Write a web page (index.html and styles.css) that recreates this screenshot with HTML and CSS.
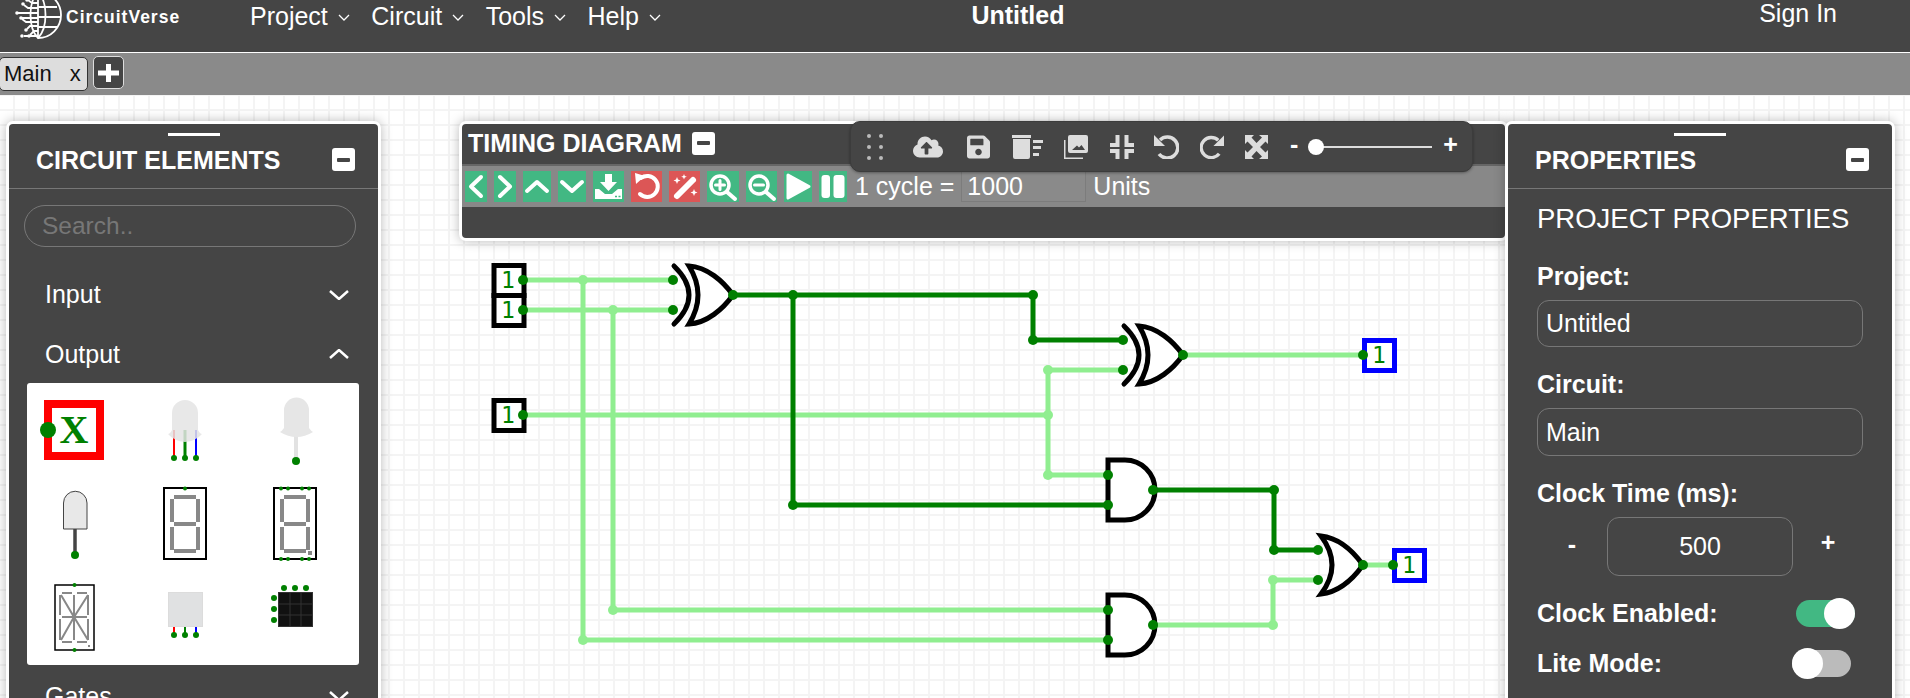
FILE: index.html
```html
<!DOCTYPE html>
<html lang="en">
<head>
<meta charset="utf-8">
<title>CircuitVerse Simulator</title>
<link rel="stylesheet" href="styles.css">
</head>
<body>
<header class="nav">
  <a class="logo">
    <svg class="logo-mark" viewBox="0 0 48 40" width="48" height="40">
      <g fill="none" stroke="#fff" stroke-width="1.8">
        <path d="M24 -8 A23 23 0 0 1 24 38"/>
        <path d="M24 -8 C14 2 14 28 24 38 C34 28 34 2 24 -8"/>
        <path d="M24 -8 V38"/>
        <path d="M24 7 H43 M24 17 H47 M24 27 H43"/>
        <path d="M24 3 H18 L14 0 M24 8 H14 L10 5 M24 13 H4 M24 18 H8 M24 22 H12 L8 19 M24 26 H16 L13 29 M24 31 H20 L16 35 M24 36 H10"/>
      </g>
      <g fill="#fff">
        <circle cx="13" cy="0" r="1.800"/><circle cx="9" cy="4" r="1.800"/><circle cx="3" cy="13" r="1.800"/><circle cx="7" cy="18" r="1.800"/><circle cx="12" cy="30" r="1.800"/><circle cx="15" cy="36" r="1.800"/><circle cx="8" cy="36" r="1.800"/>
      </g>
    </svg>
    <span class="logo-text">CircuitVerse</span>
  </a>
  <nav class="menu">
    <span class="menu-item">Project<svg class="caret" viewBox="0 0 12 7" width="12" height="7"><path d="M1 1L6 6L11 1"/></svg></span>
    <span class="menu-item">Circuit<svg class="caret" viewBox="0 0 12 7" width="12" height="7"><path d="M1 1L6 6L11 1"/></svg></span>
    <span class="menu-item">Tools<svg class="caret" viewBox="0 0 12 7" width="12" height="7"><path d="M1 1L6 6L11 1"/></svg></span>
    <span class="menu-item">Help<svg class="caret" viewBox="0 0 12 7" width="12" height="7"><path d="M1 1L6 6L11 1"/></svg></span>
  </nav>
  <div class="doc-title">Untitled</div>
  <div class="sign-in">Sign In</div>
</header>

<div class="tabs">
  <div class="tab"><span>Main</span><span class="tab-x">x</span></div>
  <button class="tab-add"><svg viewBox="0 0 21 20" width="21" height="20"><path d="M10.500 1V19M0 10H21" stroke="#fff" stroke-width="5"/></svg></button>
</div>

<main class="canvas">
  <svg class="circuit" viewBox="0 95 1910 603" width="1910" height="603">
    <g class="wire-on">
      <path d="M523 280H673M523 310H673M583 280V640H1108M613 310V610H1108M523 415H1048M1048 370V475M1048 370H1123M1048 475H1108M1183 355H1363M1153 625H1273V580H1318M1363 565H1393"/>
    </g>
    <g class="wire-hi">
      <path d="M733 295H1033V340H1123M793 295V505H1108M1153 490H1274V550H1318"/>
    </g>
    <g class="in-box">
      <rect x="494" y="265.500" width="30" height="30"/>
      <rect x="494" y="295.500" width="30" height="30"/>
      <rect x="494" y="400.500" width="30" height="30"/>
    </g>
    <g class="out-box">
      <rect x="1364.500" y="340.500" width="30" height="30"/>
      <rect x="1394.500" y="550.500" width="30" height="30"/>
    </g>
    <g class="bit">
      <text x="508" y="288">1</text>
      <text x="508" y="318">1</text>
      <text x="508" y="423">1</text>
      <text x="1379" y="363">1</text>
      <text x="1409" y="573">1</text>
    </g>
    <g class="gate">
      <g>
        <path d="M674 266Q704 295 674 324"/>
        <path d="M689 266C707 267 723 281 733 295C723 309 707 323 689 324Q707 295 689 266Z"/>
      </g>
      <g transform="translate(450 60)">
        <path d="M674 266Q704 295 674 324"/>
        <path d="M689 266C707 267 723 281 733 295C723 309 707 323 689 324Q707 295 689 266Z"/>
      </g>
      <path d="M1108 460H1125A30 30 0 0 1 1125 520H1108Z"/>
      <path d="M1108 595H1125A30 30 0 0 1 1125 655H1108Z"/>
      <path d="M1321 536C1339 538 1353 551 1363 565C1353 579 1339 592 1321 594Q1343 565 1321 536Z"/>
    </g>
    <g class="node-on">
      <circle cx="583" cy="280" r="5"/><circle cx="613" cy="310" r="5"/><circle cx="1048" cy="370" r="5"/><circle cx="1048" cy="415" r="5"/><circle cx="1048" cy="475" r="5"/><circle cx="1273" cy="580" r="5"/><circle cx="1273" cy="625" r="5"/><circle cx="583" cy="640" r="5"/><circle cx="613" cy="610" r="5"/>
    </g>
    <g class="node">
      <circle cx="523" cy="280" r="5"/><circle cx="523" cy="310" r="5"/><circle cx="523" cy="415" r="5"/><circle cx="673" cy="280" r="5"/><circle cx="673" cy="310" r="5"/><circle cx="733" cy="295" r="5"/><circle cx="793" cy="295" r="5"/><circle cx="793" cy="505" r="5"/><circle cx="1033" cy="295" r="5"/><circle cx="1033" cy="340" r="5"/><circle cx="1123" cy="340" r="5"/><circle cx="1123" cy="370" r="5"/><circle cx="1183" cy="355" r="5"/><circle cx="1363" cy="355" r="5"/><circle cx="1108" cy="475" r="5"/><circle cx="1108" cy="505" r="5"/><circle cx="1153" cy="490" r="5"/><circle cx="1274" cy="490" r="5"/><circle cx="1274" cy="550" r="5"/><circle cx="1318" cy="550" r="5"/><circle cx="1318" cy="580" r="5"/><circle cx="1363" cy="565" r="5"/><circle cx="1393" cy="565" r="5"/><circle cx="1108" cy="610" r="5"/><circle cx="1108" cy="640" r="5"/><circle cx="1153" cy="625" r="5"/>
    </g>
  </svg>

  <section class="panel timing">
    <div class="timing-head">
      <h2 class="panel-title">TIMING DIAGRAM</h2>
      <span class="minus"></span>
    </div>
    <div class="timing-bar">
      <span class="tbtn w22"><svg viewBox="0 0 22 31"><path class="ic" d="M16 6L6 15.500L16 25"/></svg></span>
      <span class="tbtn w22"><svg viewBox="0 0 22 31"><path class="ic" d="M6 6L16 15.500L6 25"/></svg></span>
      <span class="tbtn w28"><svg viewBox="0 0 28 31"><path class="ic" d="M4 20L14 11L24 20"/></svg></span>
      <span class="tbtn w28"><svg viewBox="0 0 28 31"><path class="ic" d="M4 11L14 20L24 11"/></svg></span>
      <span class="tbtn w31"><svg viewBox="0 0 31 31"><path class="solid" d="M12 3H19V11H24L15.500 20L7 11H12ZM2 18H6L12 23H19L25 18H29V28H2Z"/><path d="M22 25.500h2M25.500 25.500h2" stroke="#42b883" stroke-width="1.500"/></svg></span>
      <span class="tbtn red w31"><svg viewBox="0 0 31 31"><path class="ic" d="M10 7A10.500 10.500 0 1 1 9 23"/><path class="solid" d="M4 2L5 13L14 5Z"/></svg></span>
      <span class="tbtn red w31"><svg viewBox="0 0 31 31"><path class="ic wide" d="M8 25L24 9"/><path class="solid" d="M8 6l1 2.500 2.500 1-2.500 1-1 2.500-1-2.500-2.500-1 2.500-1zM15 3l.8 2 2 .8-2 .8-.8 2-.8-2-2-.8 2-.8zM25 18l1 2.500 2.500 1-2.500 1-1 2.500-1-2.500-2.500-1 2.500-1z"/></svg></span>
      <span class="tbtn w32"><svg viewBox="0 0 32 31"><circle class="ring" cx="13" cy="14" r="9"/><path class="ic" d="M20 21L28 28"/><path class="thin" d="M13 9.500V18.500M8.500 14H17.500"/></svg></span>
      <span class="tbtn w31"><svg viewBox="0 0 31 31"><circle class="ring" cx="13" cy="14" r="9"/><path class="ic" d="M20 21L28 28"/><path class="thin" d="M8.500 14H17.500"/></svg></span>
      <span class="tbtn w28"><svg viewBox="0 0 28 31"><path class="solid rounded" d="M4 4L25 15.500L4 27Z"/></svg></span>
      <span class="tbtn w28"><svg viewBox="0 0 28 31"><rect class="solid" x="2.500" y="4" width="8.500" height="23" rx="3"/><rect class="solid" x="14.500" y="4" width="11" height="23" rx="3"/></svg></span>
      <span class="cycle-label">1 cycle =</span>
      <input class="cycle-input" value="1000">
      <span class="cycle-unit">Units</span>
    </div>
  </section>

  <aside class="panel side elements">
    <div class="side-head">
      <h2 class="panel-title">CIRCUIT ELEMENTS</h2>
      <span class="minus"></span>
    </div>
    <input class="search" placeholder="Search..">
    <div class="acc acc-first">Input<svg class="acc-chev" viewBox="0 0 20 10" width="20" height="10"><path d="M1 1L10 9L19 1"/></svg></div>
    <div class="acc acc-open">Output<svg class="acc-chev" viewBox="0 0 20 10" width="20" height="10"><path d="M1 9L10 1L19 9"/></svg></div>
    <div class="palette">
      <svg viewBox="27 390 110 94" width="110" height="94">
        <rect x="48" y="404" width="52" height="52" fill="#fff" stroke="#f00" stroke-width="8"/>
        <text class="probe-x" x="74" y="443">X</text>
        <circle cx="48" cy="430" r="8" fill="#008000"/>
      </svg>
      <svg viewBox="137 390 111 94" width="111" height="94">
        <path d="M174 430V458" stroke="#f00" stroke-width="2"/><path d="M185 430V458" stroke="#008000" stroke-width="3"/><path d="M196 430V458" stroke="#00f" stroke-width="2"/>
        <path d="M172 430V413A13 13 0 0 1 198 413V430Q200 434 202 434Q196 441 185 442Q174 441 168 434Q170 434 172 430Z" fill="#e4e4e4" fill-opacity=".85"/>
        <circle cx="174" cy="458" r="3" fill="#008000"/><circle cx="185" cy="458" r="3" fill="#008000"/><circle cx="196" cy="458" r="3" fill="#008000"/>
      </svg>
      <svg viewBox="248 390 110 94" width="110" height="94">
        <path d="M296 435V461" stroke="#e2e2e2" stroke-width="4"/>
        <path d="M284 428V410A12.500 12.500 0 0 1 309 410V428Q311 431 313 432Q305 437 296.500 437Q288 437 280 432Q282 431 284 428Z" fill="#e6e6e6"/>
        <circle cx="296" cy="461" r="4" fill="#008000"/>
      </svg>
      <svg viewBox="27 484 110 94" width="110" height="94">
        <path d="M75 529V555" stroke="#444" stroke-width="3.500"/>
        <path d="M63.500 529V503A11.500 11.500 0 0 1 87 503V529Z" fill="#e8e8e8" stroke="#444" stroke-width="1"/>
        <circle cx="75" cy="555" r="4" fill="#008000"/>
      </svg>
      <svg viewBox="137 484 111 94" width="111" height="94">
        <rect x="164" y="488" width="42" height="71" fill="#fff" stroke="#000" stroke-width="2"/>
        <path class="seg" d="M174 497H196M172 499V522M198 499V522M174 524H196M172 527V550M198 527V550M174 551H196"/>
        <circle cx="185" cy="488.500" r="2" fill="#008000"/>
      </svg>
      <svg viewBox="248 484 110 94" width="110" height="94">
        <rect x="274" y="488" width="42" height="71" fill="#fff" stroke="#000" stroke-width="2"/>
        <path class="seg" d="M284 497H306M282 499V522M308 499V522M284 524H306M282 527V550M308 527V550M284 551H306"/>
        <rect x="308" y="551" width="4" height="4" fill="#888"/>
        <g fill="#008000"><circle cx="281" cy="488.500" r="2"/><circle cx="288" cy="488.500" r="2"/><circle cx="302" cy="488.500" r="2"/><circle cx="309" cy="488.500" r="2"/><circle cx="281" cy="559" r="2"/><circle cx="288" cy="559" r="2"/><circle cx="302" cy="559" r="2"/><circle cx="309" cy="559" r="2"/></g>
      </svg>
      <svg viewBox="27 578 110 87" width="110" height="87">
        <rect x="55" y="585" width="39" height="65" fill="#fff" stroke="#000" stroke-width="1.500"/>
        <path class="seg seg-thin" d="M62 593H72M77 593H87M60 595V615M74 595V615M88 595V615M62 617H87M60 619V640M74 619V640M88 619V640M62 642H72M77 642H87M61 595L74 617L88 595M61 640L74 617L88 640"/>
        <g fill="#008000"><circle cx="74.500" cy="585" r="2"/><circle cx="74.500" cy="650" r="2"/></g>
        <rect x="88" y="645" width="2" height="2" fill="#888"/>
      </svg>
      <svg viewBox="137 578 111 87" width="111" height="87">
        <path d="M174 627V635" stroke="#f00" stroke-width="2"/><path d="M185 627V635" stroke="#008000" stroke-width="2"/><path d="M196 627V635" stroke="#00f" stroke-width="2"/>
        <rect x="168.500" y="592.500" width="34" height="34" fill="#e0e1e2" stroke="#dcdcdc"/>
        <g fill="#008000"><circle cx="174" cy="635" r="3"/><circle cx="185" cy="635" r="3"/><circle cx="196" cy="635" r="3"/></g>
      </svg>
      <svg viewBox="248 578 110 87" width="110" height="87">
        <rect x="278.500" y="592.500" width="34" height="34" fill="#111" stroke="#333"/>
        <path d="M290 593V626M301 593V626M279 604H312M279 615H312" stroke="#333" stroke-width="1"/>
        <g fill="#008000"><circle cx="284" cy="588" r="3"/><circle cx="295" cy="588" r="3"/><circle cx="306" cy="588" r="3"/><circle cx="274" cy="598" r="3"/><circle cx="274" cy="609" r="3"/><circle cx="274" cy="620" r="3"/></g>
      </svg>
    </div>
    <div class="acc acc-last">Gates<svg class="acc-chev" viewBox="0 0 20 10" width="20" height="10"><path d="M1 1L10 9L19 1"/></svg></div>
  </aside>

  <aside class="panel side props">
    <div class="side-head">
      <h2 class="panel-title">PROPERTIES</h2>
      <span class="minus"></span>
    </div>
    <div class="props-body">
      <div class="props-heading">PROJECT PROPERTIES</div>
      <label class="field-label first">Project:</label>
      <input class="field project-input" value="Untitled">
      <label class="field-label">Circuit:</label>
      <input class="field circuit-input" value="Main">
      <label class="field-label clock">Clock Time (ms):</label>
      <div class="clock-row">
        <span class="step minus-step">-</span>
        <input class="field clock-input" value="500">
        <span class="step plus-step">+</span>
      </div>
      <div class="switch-row enabled-row">
        <span class="field-label flat">Clock Enabled:</span>
        <span class="switch on"></span>
      </div>
      <div class="switch-row lite-row">
        <span class="field-label flat">Lite Mode:</span>
        <span class="switch off"></span>
      </div>
    </div>
  </aside>

  <div class="toolbar">
    <span class="dots"><i></i><i></i><i></i><i></i><i></i><i></i></span>
    <svg class="tool w34 gap22" viewBox="0 0 640 512"><path d="M537.6 226.6c4.1-10.7 6.4-22.4 6.4-34.6 0-53-43-96-96-96-19.700 0-38.100 6-53.300 16.200C367 64.200 315.300 32 256 32c-88.400 0-160 71.600-160 160 0 2.700.1 5.400.2 8.100C40.200 219.800 0 273.200 0 336c0 79.500 64.500 144 144 144h368c70.700 0 128-57.300 128-128 0-61.900-44-113.600-102.400-125.400zM393.400 288H328v112c0 8.800-7.200 16-16 16h-48c-8.800 0-16-7.200-16-16V288h-65.400c-14.300 0-21.400-17.200-11.300-27.300l105.400-105.400c6.200-6.200 16.400-6.200 22.600 0l105.400 105.400c10.100 10.100 2.900 27.300-11.300 27.300z"/></svg>
    <svg class="tool w23 gap22" viewBox="0 32 448 448"><path d="M433.941 129.941l-83.882-83.882A48 48 0 0 0 316.118 32H48C21.490 32 0 53.490 0 80v352c0 26.510 21.490 48 48 48h352c26.510 0 48-21.490 48-48V163.882a48 48 0 0 0-14.059-33.941zM224 416c-35.346 0-64-28.654-64-64 0-35.346 28.654-64 64-64s64 28.654 64 64c0 35.346-28.654 64-64 64zm96-304.520V212c0 6.627-5.373 12-12 12H76c-6.627 0-12-5.373-12-12V108c0-6.627 5.373-12 12-12h228.520c3.183 0 6.235 1.264 8.485 3.515l3.480 3.480A11.996 11.996 0 0 1 320 111.480z"/></svg>
    <svg class="tool w31" viewBox="0 0 31 24"><path d="M0 0H19V3H0ZM1 4H18V22Q18 24 16 24H3Q1 24 1 22ZM21 5H31V8H21ZM21 11H29V14H21ZM21 18H27V21H21Z"/></svg>
    <svg class="tool w24 gap22" viewBox="0 0 24 24"><path d="M6 0H22Q24 0 24 2V16Q24 18 22 18H6Q4 18 4 16V2Q4 0 6 0ZM8 15H21L17.500 10L15 12.500L13 10.500Z" fill-rule="evenodd"/><path d="M0 5H1.500V22.500H19V24H0Z"/></svg>
    <svg class="tool w24 stroked thick gap20" viewBox="0 0 24 24"><path d="M0 10H7.500V0M24 10H16.500V0M0 16H7.500V24M24 16H16.500V24"/></svg>
    <svg class="tool w25 stroked" viewBox="0 0 25 24"><path d="M6 5A10.500 10.500 0 1 1 5 19"/><path class="fill" d="M0 0V11H11Z"/></svg>
    <svg class="tool w24 stroked" viewBox="0 0 25 24"><path d="M19 5A10.500 10.500 0 1 0 20 19"/><path class="fill" d="M25 0V11H14Z"/></svg>
    <svg class="tool w23" viewBox="0 0 23 24"><path d="M0 0H9L6.500 2.500L11.500 8L17 2.500L14 0H23V9L20.500 6.500L15 12L20.500 17.500L23 15V24H14L17 21.500L11.500 16L6.500 21.500L9 24H0V15L2.500 17.500L8 12L2.500 6.500L0 9Z"/></svg>
    <div class="zoom">
      <span class="zoom-sign">-</span>
      <span class="zoom-track"><span class="zoom-thumb"></span></span>
      <span class="zoom-sign plus">+</span>
    </div>
  </div>
</main>
</body>
</html>
```

FILE: styles.css
```css
* { box-sizing: border-box; }
html, body { margin: 0; padding: 0; }
body {
  width: 1910px;
  height: 698px;
  overflow: hidden;
  background: #fff;
  font-family: "Liberation Sans", Arial, sans-serif;
  font-size: 25px;
  color: #fff;
}

/* Top bar */
.nav {
  display: flex;
  align-items: flex-start;
  height: 53px;
  background: #454545;
  border-bottom: 1px solid #fff;
  line-height: 33px;
}
.logo { display: flex; width: 250px; height: 52px; padding-left: 14px; }
.logo-mark { display: block; }
.logo-text {
  font-size: 17.500px;
  font-weight: 700;
  letter-spacing: 1px;
  margin: 1px 0 0 4px;
  line-height: 33px;
}
.menu { display: flex; gap: 21.500px; }
.menu-item { display: flex; align-items: center; }
.caret { margin-left: 10px; fill: none; stroke: #fff; stroke-width: 1.300; margin-top: 2px; }
.doc-title { margin-left: 310.500px; font-weight: 700; line-height: 30px; }
.sign-in { margin-left: auto; padding-right: 73px; line-height: 26px; }

/* Tabs */
.tabs {
  display: flex;
  align-items: flex-start;
  height: 42px;
  padding-top: 3px;
  background: #8a8a8a;
  color: #111;
}
.tab {
  display: flex;
  align-items: center;
  width: 89px;
  height: 34px;
  margin: 1px 5px 0 -1px;
  padding-left: 4px;
  background: #ddd;
  border: 1px solid #333;
  border-radius: 5px;
  font-size: 22px;
}
.tab-x { margin-left: 18px; }
.tab-add {
  display: flex;
  align-items: center;
  justify-content: center;
  width: 31px;
  height: 33px;
  padding: 0;
  background: #454545;
  border: 1px solid #ddd;
  border-radius: 5px;
}

/* Canvas */
.canvas {
  position: relative;
  height: 603px;
  overflow: hidden;
  background-color: #fff;
  background-image:
    linear-gradient(#f4f4f4 2px, transparent 2px),
    linear-gradient(90deg, #f4f4f4 2px, transparent 2px);
  background-size: 15px 15px;
  background-position: 13px 14px;
}
.circuit { position: absolute; left: 0; top: 0; }
.wire-on path, .wire-hi path { fill: none; stroke-width: 5; }
.wire-on path { stroke: #90ee90; }
.wire-hi path { stroke: #008000; }
.in-box rect { fill: #fff; stroke: #000; stroke-width: 5; }
.out-box rect { fill: #fff; stroke: #00f; stroke-width: 5; }
.bit text {
  font-family: "DejaVu Sans Mono", monospace;
  font-size: 23px;
  fill: #008000;
  text-anchor: middle;
}
.gate path { fill: #fff; stroke: #000; stroke-width: 5; stroke-linecap: round; }
.gate g path:first-child { fill: none; }
.node circle { fill: #008000; }
.node-on circle { fill: #90ee90; }

/* Panels */
.panel {
  position: absolute;
  top: 26px;
  background: #454545;
  border: 3px solid #fff;
  border-radius: 7px;
  box-shadow: 0 0 12px rgba(0, 0, 0, .28);
}
.panel-title { margin: 0; font-size: 25px; font-weight: 700; line-height: 30px; }
.minus {
  display: flex;
  align-items: center;
  justify-content: center;
  width: 23px;
  height: 23px;
  background: #fff;
  border-radius: 3px;
}
.minus::before { content: ""; width: 13px; height: 4px; background: #454545; border-radius: 1px; }

.timing { left: 459px; width: 1049px; height: 120px; }
.timing-head {
  display: flex;
  align-items: center;
  gap: 10px;
  height: 42px;
  padding: 0 6px 2px;
  border-bottom: 2px solid #666;
}
.timing-bar {
  display: flex;
  align-items: center;
  gap: 7px;
  height: 41px;
  padding-left: 3px;
  background: #888;
}
.tbtn { display: block; height: 31px; background: #42b883; margin-top: -1px; }
.tbtn svg { display: block; width: 100%; height: 100%; }
.tbtn.red { background: #dc5656; }
.w22 { width: 22px; }
.w28 { width: 28px; }
.w31 { width: 31px; }
.w32 { width: 32px; }
.ic, .thin, .ring { fill: none; stroke: #fff; stroke-linecap: round; stroke-linejoin: round; }
.ic { stroke-width: 4; }
.ic.wide { stroke-width: 6; }
.ring { stroke-width: 3.500; }
.thin { stroke-width: 3; }
.solid { fill: #fff; }
.rounded { stroke: #fff; stroke-width: 3; stroke-linejoin: round; }
.cycle-label { margin-left: 1px; }
.cycle-input {
  width: 125px;
  height: 31px;
  padding: 0 5px;
  background: #8a8a8a;
  border: 1px solid #7c7c7c;
  color: #fff;
  font: 25px "Liberation Sans", Arial, sans-serif;
}
.cycle-unit { margin-left: 0; }

/* Side panels */
.side { height: 650px; }
.elements { left: 6px; width: 375px; }
.props { left: 1505px; width: 390px; }
.side::before {
  content: "";
  position: absolute;
  left: 50%;
  top: 9px;
  width: 52px;
  height: 3px;
  margin-left: -26px;
  background: #fff;
}
.side-head {
  display: flex;
  align-items: center;
  justify-content: space-between;
  height: 65px;
  padding: 7px 23px 0 27px;
  border-bottom: 1px solid #777;
}
.search {
  display: block;
  width: 332px;
  height: 42px;
  margin: 16px 0 17px 15px;
  padding: 0 17px;
  background: transparent;
  border: 1px solid #777;
  border-radius: 21px;
  color: #fff;
  font: 24.500px "Liberation Sans", Arial, sans-serif;
}
.search::placeholder { color: #777; opacity: 1; }
.acc {
  display: flex;
  align-items: center;
  justify-content: space-between;
  height: 60px;
  padding: 0 29px 0 36px;
}
.acc-first { height: 61px; }
.acc-open { height: 58px; }
.acc-last { height: 62px; }
.acc-chev { fill: none; stroke: #fff; stroke-width: 2.500; }
.palette {
  display: grid;
  grid-template-columns: 110px 111px 110px;
  grid-template-rows: 94px 94px 87px;
  width: 332px;
  height: 282px;
  margin-left: 18px;
  padding-top: 7px;
  background: #fff;
  border-radius: 3px;
}
.palette svg { display: block; }
.probe-x {
  font-family: "Liberation Serif", serif;
  font-size: 40px;
  font-weight: 700;
  fill: #008000;
  text-anchor: middle;
}
.seg { fill: none; stroke: #888; stroke-width: 4; }
.seg-thin { stroke-width: 2; }

.props-body { padding: 0 29px; }
.props-heading { height: 60px; line-height: 60px; font-size: 27.500px; white-space: nowrap; }
.field-label { display: block; height: 30px; line-height: 30px; font-weight: 700; margin-top: 22px; }
.field-label.first { margin-top: 12px; }
.field-label.clock { margin-top: 22px; }
.field-label.flat { margin: 0; }
.field {
  display: block;
  width: 326px;
  height: 47px;
  margin-top: 9px;
  padding: 0 8px;
  background: transparent;
  border: 1px solid #777;
  border-radius: 12px;
  color: #fff;
  font: 25px "Liberation Sans", Arial, sans-serif;
}
.circuit-input { height: 48px; }
.clock-row {
  display: grid;
  grid-template-columns: 70px 186px 70px;
  height: 59px;
  margin-top: 9px;
  align-items: center;
}
.clock-input { width: 186px; height: 59px; margin: 0; text-align: center; }
.step { text-align: center; font-weight: 700; }
.minus-step { padding-bottom: 4px; }
.plus-step { padding-bottom: 8px; }
.switch-row { display: flex; align-items: center; justify-content: space-between; height: 30px; }
.enabled-row { margin-top: 22px; }
.lite-row { margin-top: 20px; }
.switch { position: relative; display: block; width: 59px; height: 27px; border-radius: 14px; margin-top: 1px; }
.switch::after {
  content: "";
  position: absolute;
  top: -2px;
  width: 31px;
  height: 31px;
  background: #fff;
  border-radius: 50%;
}
.switch.on { background: #42b883; margin-right: 8px; }
.switch.on::after { right: 0; }
.switch.off { background: #bbb; margin-right: 12px; }
.switch.off::after { left: 0; }

/* Floating toolbar */
.toolbar {
  position: absolute;
  left: 850px;
  top: 26px;
  display: flex;
  align-items: center;
  width: 623px;
  height: 51px;
  padding: 0 0 0 16px;
  background: #454545;
  border: 1px solid #3c3c3c;
  border-radius: 10px;
  box-shadow: 0 1px 3px rgba(0, 0, 0, .35);
}
.dots { display: grid; grid-template-columns: 4px 4px; column-gap: 8px; row-gap: 7px; margin-right: 28px; }
.dots i { width: 4px; height: 4px; background: #bbb; border-radius: 50%; }
.tool { display: block; height: 24px; margin-right: 21px; fill: #ddd; flex: none; }
.tool.gap22 { margin-right: 22px; }
.tool.gap20 { margin-right: 20px; }
.tool.w34 { width: 34px; }
.tool.w23 { width: 23px; }
.tool.w31 { width: 31px; }
.tool.w24 { width: 24px; }
.tool.w25 { width: 25px; }
.stroked { fill: none; stroke: #ddd; stroke-width: 3.500; }
.stroked.thick { stroke-width: 4; }
.stroked .fill { fill: #ddd; stroke: none; }
.zoom { display: flex; align-items: center; margin-left: 1px; }
.zoom-sign { font-weight: 700; line-height: 24px; margin-top: -5px; }
.zoom-track { position: relative; width: 116px; height: 2px; margin-left: 18px; background: #ddd; }
.zoom-thumb { position: absolute; left: -8px; top: -7px; width: 16px; height: 16px; background: #fff; border-radius: 50%; }
.zoom-sign.plus { margin-left: 11px; }
```
